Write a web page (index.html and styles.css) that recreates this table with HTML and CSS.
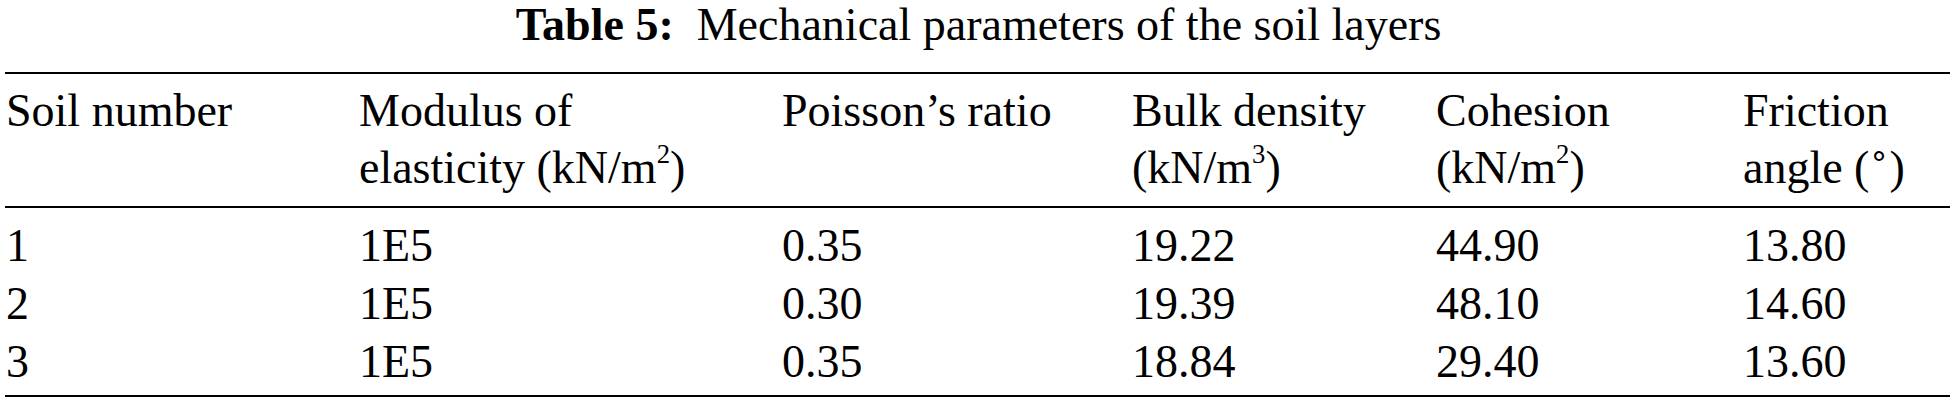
FILE: index.html
```html
<!DOCTYPE html>
<html>
<head>
<meta charset="utf-8">
<link rel="stylesheet" href="styles.css">
</head>
<body>
<div class="wrap">
  <div class="caption"><b>Table 5:</b>&nbsp; Mechanical parameters of the soil layers</div>
  <table class="tbl">
    <colgroup>
      <col class="c1"><col class="c2"><col class="c3"><col class="c4"><col class="c5"><col class="c6">
    </colgroup>
    <thead>
      <tr>
        <th>Soil number</th>
        <th>Modulus of<br>elasticity (kN/m<sup>2</sup>)</th>
        <th>Poisson’s ratio</th>
        <th>Bulk density<br>(kN/m<sup>3</sup>)</th>
        <th>Cohesion<br>(kN/m<sup>2</sup>)</th>
        <th>Friction<br>angle (<sup class="deg">∘</sup>)</th>
      </tr>
    </thead>
    <tbody>
      <tr class="first"><td>1</td><td>1E5</td><td>0.35</td><td>19.22</td><td>44.90</td><td>13.80</td></tr>
      <tr><td>2</td><td>1E5</td><td>0.30</td><td>19.39</td><td>48.10</td><td>14.60</td></tr>
      <tr class="last"><td>3</td><td>1E5</td><td>0.35</td><td>18.84</td><td>29.40</td><td>13.60</td></tr>
    </tbody>
  </table>
</div>
</body>
</html>
```
FILE: styles.css
```css
html, body {
  margin: 0;
  padding: 0;
  background: #ffffff;
}
body {
  font-family: "Liberation Serif", "Times New Roman", serif;
  font-size: 46px;
  color: #000;
}
.wrap {
  padding: 0 4px 0 5px;
}
.caption {
  text-align: center;
  line-height: 50px;
  margin-bottom: 22px;
  padding-left: 2px;
}
.caption b {
  font-weight: bold;
}
.tbl {
  width: 100%;
  border-collapse: collapse;
  table-layout: fixed;
  border-top: 2.5px solid #000;
  border-bottom: 2.5px solid #000;
}
.c1 { width: 353px; }
.c2 { width: 423px; }
.c3 { width: 350px; }
.c4 { width: 304px; }
.c5 { width: 307px; }
.tbl th, .tbl td {
  text-align: left;
  font-weight: normal;
  vertical-align: top;
  padding: 0 0 0 1px;
  white-space: nowrap;
}
.tbl thead th {
  line-height: 57px;
  padding-top: 8px;
  padding-bottom: 10px;
  border-bottom: 2.5px solid #000;
}
.tbl td {
  line-height: 58px;
}
.tbl tr.first td { padding-top: 9px; }
.tbl tr.last td { padding-bottom: 4px; }
sup {
  font-size: 0.58em;
  line-height: 0;
  vertical-align: 0.75em;
}
sup.deg {
  font-size: 0.7em;
  vertical-align: 0.55em;
}
```
